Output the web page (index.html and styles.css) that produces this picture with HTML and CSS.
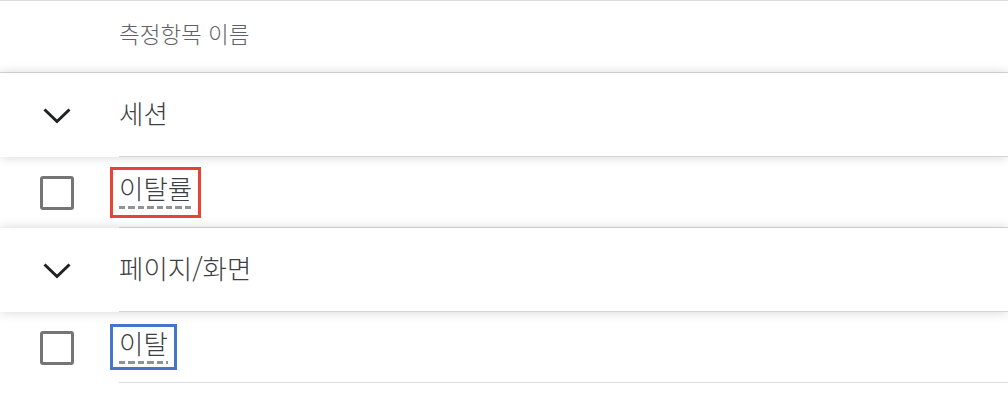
FILE: index.html
```html
<!DOCTYPE html>
<html lang="ko">
<head>
<meta charset="utf-8">
<link rel="stylesheet" href="styles.css">
</head>
<body>
<div class="table">
  <div class="row head">
    <div class="icon-cell"></div>
    <div class="text-cell head-text">측정항목 이름</div>
  </div>
  <div class="row group">
    <div class="icon-cell">
      <svg class="chevron" width="28" height="16" viewBox="0 0 28 16"><polyline points="1.5,1.5 14,13.5 26.5,1.5" fill="none" stroke="#202124" stroke-width="3"/></svg>
    </div>
    <div class="text-cell group-text">세션</div>
  </div>
  <div class="row item">
    <div class="icon-cell"><span class="checkbox"></span></div>
    <div class="text-cell"><span class="metric mark-red">이탈률</span></div>
  </div>
  <div class="row group">
    <div class="icon-cell">
      <svg class="chevron" width="28" height="16" viewBox="0 0 28 16"><polyline points="1.5,1.5 14,13.5 26.5,1.5" fill="none" stroke="#202124" stroke-width="3"/></svg>
    </div>
    <div class="text-cell group-text">페이지/화면</div>
  </div>
  <div class="row item">
    <div class="icon-cell"><span class="checkbox"></span></div>
    <div class="text-cell"><span class="metric mark-blue">이탈</span></div>
  </div>
</div>
</body>
</html>
```
FILE: styles.css
```css
html, body {
  margin: 0;
  padding: 0;
  background: #ffffff;
}

body {
  font-family: "Noto Sans CJK KR", "Noto Sans", sans-serif;
  font-weight: 300;
  color: #3c4043;
  font-size: 26.5px;
}

.table {
  border-top: 1px solid #dadce0;
}

.row {
  display: flex;
  align-items: stretch;
  background: #ffffff;
}

.icon-cell {
  width: 119px;
  box-sizing: border-box;
  padding-right: 6px;
  display: flex;
  align-items: center;
  justify-content: center;
  flex: none;
}

.text-cell {
  flex: 1;
  display: flex;
  align-items: center;
  border-bottom: 1px solid #dadce0;
  line-height: 30px;
  box-sizing: border-box;
}

.head {
  height: 71px;
  border-bottom: 1px solid #dadce0;
}

.head .text-cell {
  border-bottom: none;
}

.head-text {
  font-size: 22.5px;
  color: #5f6368;
  padding-bottom: 7px;
}

.group {
  height: 84px;
  position: relative;
  z-index: 1;
  box-shadow: 0 0 10px rgba(60, 64, 67, 0.22);
}

.group-text {
  padding-bottom: 4px;
  border-bottom-color: #d4d6da;
}

.item {
  height: 71px;
}

.chevron {
  display: block;
  margin-top: 1px;
}

.checkbox {
  display: block;
  width: 34px;
  height: 34px;
  box-sizing: border-box;
  border: 3px solid #757575;
  border-radius: 3px;
}

.metric {
  position: relative;
  display: inline-block;
  padding-bottom: 6px;
  margin-top: -2px;
  background-image: repeating-linear-gradient(to right, #8e9398 0 6.5px, transparent 6.5px 9.4px);
  background-size: 100% 3px;
  background-repeat: no-repeat;
  background-position: left bottom;
}

.metric::after {
  content: "";
  position: absolute;
  border: 3px solid transparent;
}

.mark-red::after {
  top: -6px;
  right: -9px;
  bottom: -9px;
  left: -9px;
  border-color: #ea4335;
}

.mark-blue::after {
  top: -4px;
  right: -9px;
  bottom: -6px;
  left: -9px;
  border-color: #4676c8;
}
```
